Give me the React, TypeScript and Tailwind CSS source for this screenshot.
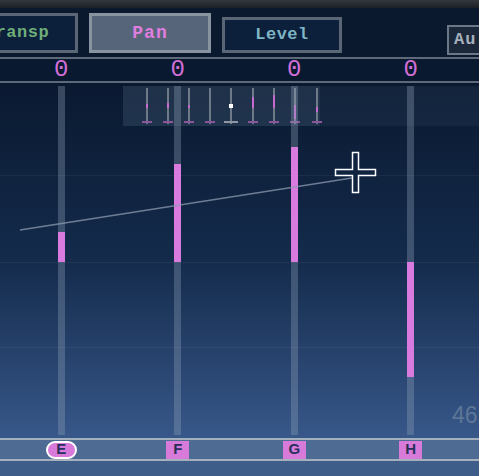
const tracks = [
  { label: "E", top: 146, height: 30, pill: true },
  { label: "F", top: 78, height: 98 },
  { label: "G", top: 61, height: 115 },
  { label: "H", top: 176, height: 115 },
];

const miniTicks = [
  { x: 23, mag: [16, 4] },
  { x: 44, mag: [15, 5] },
  { x: 65, mag: [17, 3] },
  { x: 86, mag: null },
  { x: 107, mag: null, dot: true },
  { x: 129, mag: [9, 11] },
  { x: 150, mag: [7, 13] },
  { x: 171, mag: [17, 14] },
  { x: 193, mag: [19, 5] },
];

export default function App() {
  return (
    <div className="w-[479px] h-[476px] overflow-hidden flex flex-col bg-[#0a1a2e] font-['Liberation_Mono',monospace]">
      {/* window edge */}
      <div className="h-[8px] bg-linear-to-b from-[#34383d] to-[#1b2027]" />

      {/* mode buttons */}
      <div className="h-[49px] flex items-start bg-[#0a192d]">
        <div className="shrink-0 ml-[-44px] mt-[5px] w-[122px] h-[40px] border-[3px] border-[#5a6575] bg-[#0c1f3b] flex items-center justify-center text-[17px] font-bold tracking-[0.5px] text-[#6fae78]">
          Transp
        </div>
        <div className="shrink-0 ml-[11px] mt-[5px] w-[122px] h-[40px] border-[3px] border-[#8994a1] bg-[#566579] flex items-center justify-center text-[18px] font-bold tracking-[1px] text-[#e07ee0]">
          Pan
        </div>
        <div className="shrink-0 ml-[11px] mt-[9px] w-[120px] h-[36px] border-[3px] border-[#5a6575] bg-[#0c1f3b] flex items-center justify-center text-[17px] font-bold tracking-[0.5px] text-[#7fb6c6]">
          Level
        </div>
        <div className="shrink-0 ml-[105px] mt-[17px] w-[40px] h-[30px] border-[2px] border-[#6b7686] bg-[#1a283a] flex items-center pl-[5px] text-[17px] font-bold tracking-[1px] text-[#a6b0bc]">
          Au
        </div>
      </div>

      <div className="h-[2px] bg-[#5e6979]" />

      {/* values */}
      <div className="h-[22px] pl-[3px] flex bg-[#091a30]">
        {tracks.map((t) => (
          <div key={t.label} className="w-[116.5px] flex items-center justify-center text-[24px] leading-none text-[#d46fd8]">
            0
          </div>
        ))}
      </div>

      <div className="h-[2px] bg-[#5e6979]" />

      {/* step area */}
      <div className="relative h-[355px] bg-linear-to-b from-[#0a1930] via-[#142b4c] to-[#38588a]">
        {/* grid lines */}
        <div className="absolute left-0 right-0 top-[92px] h-px bg-white/5" />
        <div className="absolute left-0 right-0 top-[179px] h-px bg-white/5" />
        <div className="absolute left-0 right-0 top-[264px] h-px bg-white/5" />

        {/* mini overview */}
        <div className="absolute left-[123px] top-[3px] w-[356px] h-[40px] flex">
          <div className="relative w-[197px] h-full bg-[#3a5068]/45">
            {miniTicks.map((m) => (
              <div key={m.x} className="absolute top-[2px] w-[2px] h-[36px] bg-[#6f7a88]" style={{ left: m.x }}>
                {m.mag && (
                  <div className="absolute left-0 w-[2px] bg-[#c66ad0]" style={{ top: m.mag[0], height: m.mag[1] }} />
                )}
                {m.dot && <div className="absolute left-[-1px] top-[16px] w-[4px] h-[4px] bg-white" />}
                <div className={`absolute bottom-[1px] h-[2px] ${m.dot ? "left-[-6px] w-[14px] bg-[#8d96a2]" : "left-[-4px] w-[10px] bg-[#8a559a]"}`} />
              </div>
            ))}
          </div>
          <div className="flex-1 h-full bg-[#2a3e58]/30" />
        </div>

        {/* tracks */}
        <div className="absolute inset-0 pl-[3px] flex">
          {tracks.map((t) => (
            <div key={t.label} className="w-[116.5px] flex justify-center pt-[3px] pb-[3px]">
              <div className="relative w-[7px] h-full bg-[#8ea0b8]/35">
                <div className="absolute left-0 w-[7px] bg-[#d97ade]" style={{ top: t.top, height: t.height }} />
              </div>
            </div>
          ))}
        </div>

        {/* curve line and cursor */}
        <svg className="absolute inset-0" width="479" height="355" viewBox="0 0 479 355">
          <line x1="20" y1="147" x2="352" y2="95" stroke="#8d9bb0" strokeOpacity="0.75" strokeWidth="1.5" />
          <path
            d="M352.5 69.5 h6 v17 h17 v6 h-17 v17 h-6 v-17 h-17 v-6 h17 z"
            fill="#10243f"
            stroke="#ffffff"
            strokeWidth="1.5"
          />
        </svg>

        <div className="absolute left-[452px] top-[321px] text-[23px] leading-none font-['Liberation_Sans',sans-serif] text-[#5d7697]">
          46
        </div>
      </div>

      <div className="h-[2px] bg-[#a6b0bc]" />

      {/* step labels */}
      <div className="h-[19px] pl-[3px] flex bg-[#4d6b93]">
        {tracks.map((t) => (
          <div key={t.label} className="w-[116.5px] flex items-center justify-center">
            {t.pill ? (
              <div className="w-[31px] h-[18px] rounded-full border-[2px] border-white bg-[#d87ada] flex items-center justify-center text-[15px] font-bold font-['Liberation_Sans',sans-serif] text-[#27305a]">
                {t.label}
              </div>
            ) : (
              <div className="w-[23px] h-[18px] bg-[#d87ada] flex items-center justify-center text-[15px] font-bold font-['Liberation_Sans',sans-serif] text-[#27305a]">
                {t.label}
              </div>
            )}
          </div>
        ))}
      </div>

      <div className="h-[2px] bg-[#a6b0bc]" />
      <div className="flex-1 bg-[#3e5e89]" />
    </div>
  );
}
